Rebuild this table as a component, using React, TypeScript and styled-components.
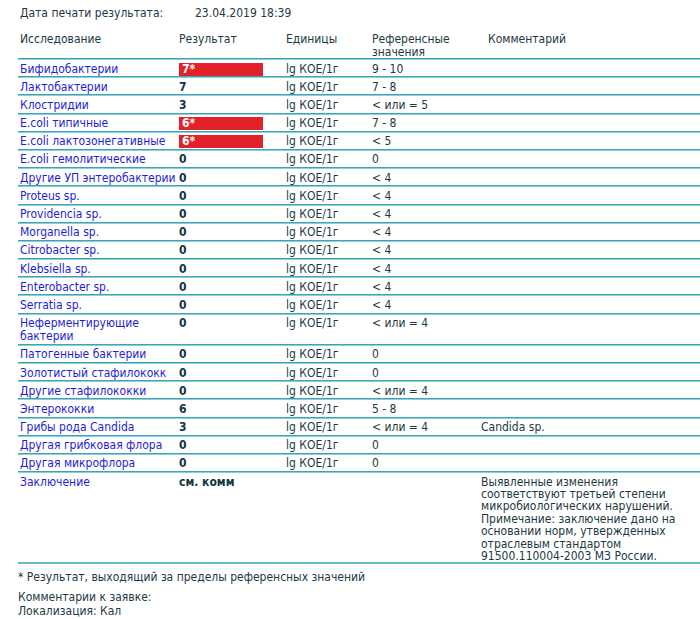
import styled, { createGlobalStyle } from "styled-components";

const GlobalStyle = createGlobalStyle`
  html, body {
    margin: 0;
    padding: 0;
    background: #fff;
  }
  body {
    font-family: "DejaVu Sans Condensed", "DejaVu Sans", Tahoma, sans-serif;
    font-size: 12px;
    color: #1d3942;
  }
`;

type Item = {
  name: string[];
  value: string;
  flag?: boolean;
  units: string;
  ref: string;
  comment?: string;
};

const items: Item[] = [
  { name: ["Бифидобактерии"], value: "7*", flag: true, units: "lg КОЕ/1г", ref: "9 - 10" },
  { name: ["Лактобактерии"], value: "7", units: "lg КОЕ/1г", ref: "7 - 8" },
  { name: ["Клостридии"], value: "3", units: "lg КОЕ/1г", ref: "< или = 5" },
  { name: ["E.coli типичные"], value: "6*", flag: true, units: "lg КОЕ/1г", ref: "7 - 8" },
  { name: ["E.coli лактозонегативные"], value: "6*", flag: true, units: "lg КОЕ/1г", ref: "< 5" },
  { name: ["E.coli гемолитические"], value: "0", units: "lg КОЕ/1г", ref: "0" },
  { name: ["Другие УП энтеробактерии"], value: "0", units: "lg КОЕ/1г", ref: "< 4" },
  { name: ["Proteus sp."], value: "0", units: "lg КОЕ/1г", ref: "< 4" },
  { name: ["Providencia sp."], value: "0", units: "lg КОЕ/1г", ref: "< 4" },
  { name: ["Morganella sp."], value: "0", units: "lg КОЕ/1г", ref: "< 4" },
  { name: ["Citrobacter sp."], value: "0", units: "lg КОЕ/1г", ref: "<  4" },
  { name: ["Klebsiella sp."], value: "0", units: "lg КОЕ/1г", ref: "< 4" },
  { name: ["Enterobacter sp."], value: "0", units: "lg КОЕ/1г", ref: "< 4" },
  { name: ["Serratia sp."], value: "0", units: "lg КОЕ/1г", ref: "< 4" },
  { name: ["Неферментирующие", "бактерии"], value: "0", units: "lg КОЕ/1г", ref: "< или = 4" },
  { name: ["Патогенные бактерии"], value: "0", units: "lg КОЕ/1г", ref: "0" },
  { name: ["Золотистый стафилококк"], value: "0", units: "lg КОЕ/1г", ref: "0" },
  { name: ["Другие стафилококки"], value: "0", units: "lg КОЕ/1г", ref: "< или = 4" },
  { name: ["Энтерококки"], value: "6", units: "lg КОЕ/1г", ref: "5 - 8" },
  { name: ["Грибы рода Candida"], value: "3", units: "lg КОЕ/1г", ref: "< или = 4", comment: "Candida sp." },
  { name: ["Другая грибковая флора"], value: "0", units: "lg КОЕ/1г", ref: "0" },
  { name: ["Другая микрофлора"], value: "0", units: "lg КОЕ/1г", ref: "0" },
];

const conclusion = [
  "Выявленные изменения",
  "соответствуют третьей степени",
  "микробиологических нарушений.",
  "Примечание: заключение дано на",
  "основании норм, утвержденных",
  "отраслевым стандартом",
  "91500.110004-2003 МЗ России.",
];

function App() {
  return (
    <>
      <GlobalStyle />
      <Page>
        <DateLine>
          <span>Дата печати результата:</span>
          <span>23.04.2019 18:39</span>
        </DateLine>

        <Table>
          <HeadRow>
            <Cell>Исследование</Cell>
            <Cell>Результат</Cell>
            <Cell>Единицы</Cell>
            <Cell>
              Референсные
              <br />
              значения
            </Cell>
            <Cell indent>Комментарий</Cell>
          </HeadRow>

          {items.map((it) => (
            <Row key={it.name.join(" ")}>
              <NameCell>
                {it.name.map((n) => (
                  <div key={n}>{n}</div>
                ))}
              </NameCell>
              <Cell>
                <Result flag={it.flag}>{it.value}</Result>
              </Cell>
              <Cell>{it.units}</Cell>
              <Cell>{it.ref}</Cell>
              <Cell>{it.comment}</Cell>
            </Row>
          ))}

          <Row last>
            <NameCell>Заключение</NameCell>
            <Cell>
              <Result>см. комм</Result>
            </Cell>
            <Cell />
            <Cell />
            <Conclusion>
              {conclusion.map((l) => (
                <div key={l}>{l}</div>
              ))}
            </Conclusion>
          </Row>
        </Table>

        <Note>* Результат, выходящий за пределы референсных значений</Note>
        <Footer>
          <div>Комментарии к заявке:</div>
          <div>Локализация: Кал</div>
        </Footer>
      </Page>
    </>
  );
}

export default App;

const Page = styled.div`
  padding-left: 18px;
  width: 682px;
`;

const DateLine = styled.div`
  display: grid;
  grid-template-columns: 175px auto;
  padding: 6px 0 0 2px;
  line-height: 14px;
`;

const Table = styled.div`
  margin-top: 10px;
`;

const cols = "159px 107px 86px 109px 1fr";

const HeadRow = styled.div`
  display: grid;
  grid-template-columns: ${cols};
  line-height: 13px;
  padding-top: 3px;
  height: 25px;
`;

const Row = styled.div<{ last?: boolean }>`
  display: grid;
  grid-template-columns: ${cols};
  line-height: 13px;
  padding: 4.5px 0 0.7px;
  background: linear-gradient(#3ea3b3 0 1px, #8ad0da 1px 2px, transparent 2px) top / 100% 2px no-repeat;
  ${(p) =>
    p.last &&
    `
    padding-bottom: 0;
    border-bottom: 2px solid #62bac8;
  `}
`;

const Cell = styled.div<{ indent?: boolean }>`
  padding-left: ${(p) => (p.indent ? 9 : 2)}px;
  white-space: nowrap;
`;

const NameCell = styled(Cell)`
  color: #1e1ed9;
`;

const Conclusion = styled(Cell)`
  line-height: 12.4px;
`;

const Result = styled.span<{ flag?: boolean }>`
  display: block;
  width: ${(p) => (p.flag ? "81px" : "auto")};
  height: 13px;
  padding-left: ${(p) => (p.flag ? 3 : 0)}px;
  font-weight: bold;
  color: ${(p) => (p.flag ? "#fff" : "#0f3440")};
  background: ${(p) => (p.flag ? "#e2212a" : "transparent")};
`;

const Note = styled.div`
  margin-top: 6px;
  line-height: 14px;
`;

const Footer = styled.div`
  margin-top: 6px;
  line-height: 14px;
`;
